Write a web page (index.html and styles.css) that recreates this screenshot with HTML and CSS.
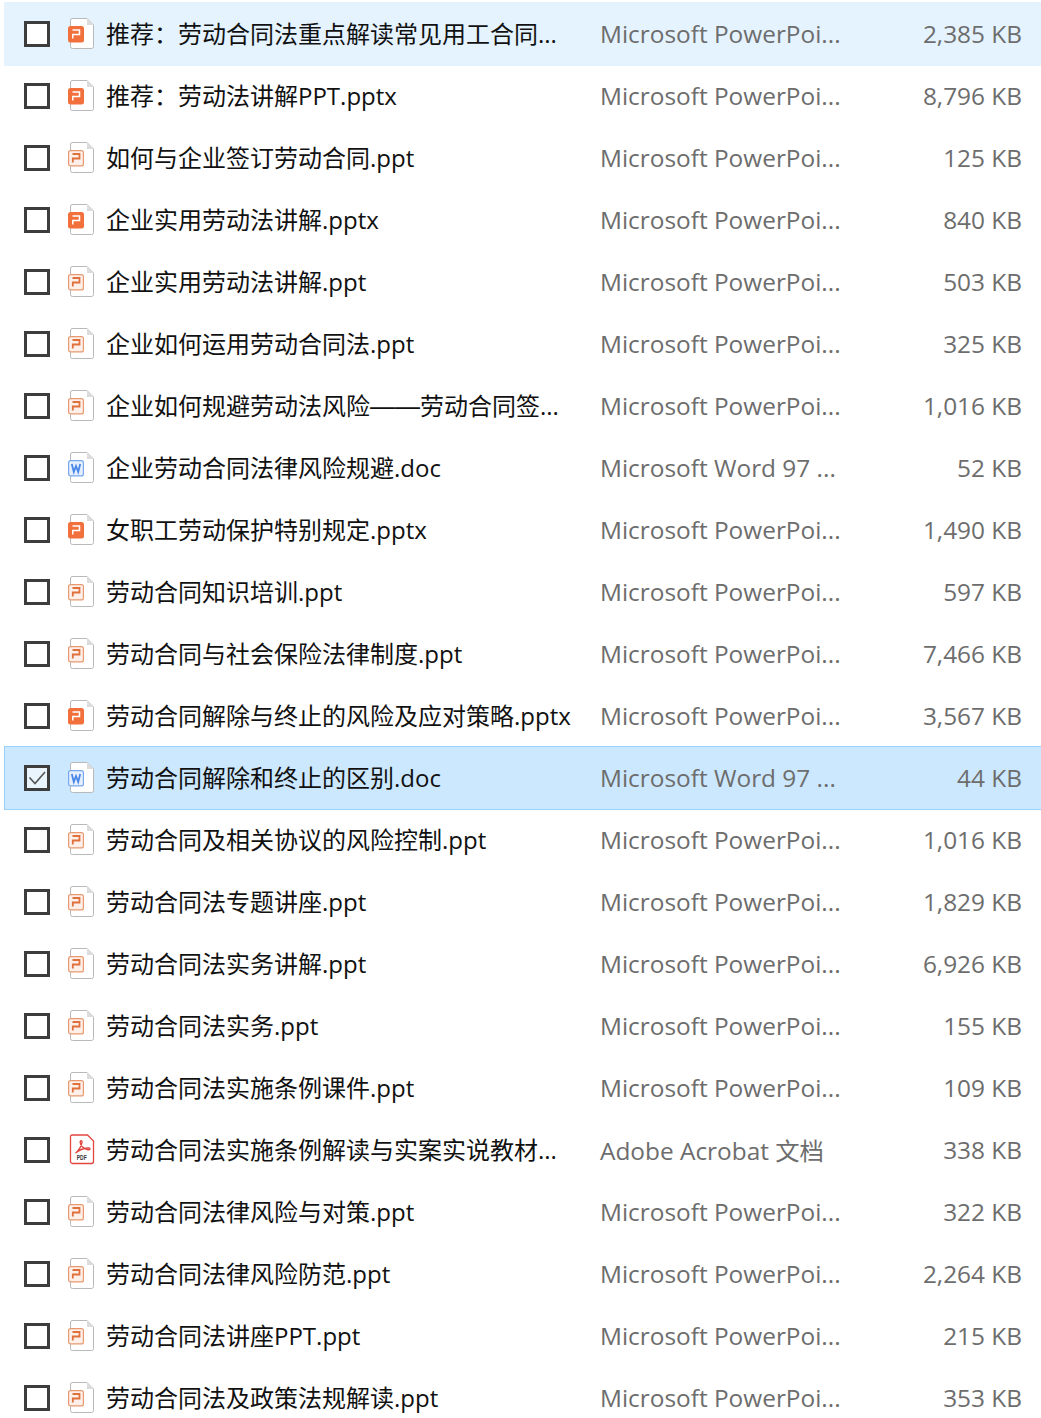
FILE: index.html
```html
<!DOCTYPE html>
<html>
<head>
  <meta charset="utf-8">
  <title>劳动合同法</title>
  <link rel="stylesheet" href="styles.css">
</head>
<body>
<svg class="icon-defs" width="0" height="0">
  <defs>
    <symbol id="page" viewBox="0 0 28 32">
      <path d="M4 .5H19L25.5 7V28.5a2 2 0 0 1-2 2H4.500a2 2 0 0 1-2-2V2a2 2 0 0 1 1.500-1.500Z" fill="#fff" stroke="#b9b9b9"/>
      <path d="M19 .5V7H25.500Z" fill="#dcdcdc"/>
    </symbol>
    <symbol id="icon-pptx" viewBox="0 0 28 32">
      <use href="#page"/>
      <rect x="0" y="8" width="16" height="16.500" rx="2.500" fill="#f2703c"/>
      <path d="M4.500 12H11.500V16.500H4.800V20.500" fill="none" stroke="#fff" stroke-width="1.500"/>
    </symbol>
    <symbol id="icon-ppt" viewBox="0 0 28 32">
      <use href="#page"/>
      <rect x=".6" y="8.600" width="14.800" height="15.300" rx="2" fill="#fdf0ea" stroke="#e9996f" stroke-width="1.200"/>
      <path d="M4.500 12H11.500V16.500H4.800V20.500" fill="none" stroke="#e0703c" stroke-width="1.800"/>
    </symbol>
    <symbol id="icon-doc" viewBox="0 0 28 32">
      <use href="#page"/>
      <rect x=".6" y="8.600" width="14.800" height="15.300" rx="2" fill="#e6f0fd" stroke="#79a8ee" stroke-width="1.200"/>
      <path d="M3.800 12L5.800 20L8 14L10.200 20L12.200 12" fill="none" stroke="#4a86e8" stroke-width="1.800"/>
    </symbol>
    <symbol id="icon-pdf" viewBox="0 0 28 32">
      <path d="M4 1H19.500L25.500 7V27.500a2 2 0 0 1-2 2H4.500a2 2 0 0 1-2-2V2.500A1.500 1.500 0 0 1 4 1Z" fill="#fff" stroke="#e2463f" stroke-width="1.300"/>
      <path d="M7.500 19C10.500 17 13.500 12 14 8.500C14.300 6 12 6 12.200 8.500C12.500 12 16.500 15.500 20 15.800C22.500 16 22.500 13.800 20 14C16 14.300 10.500 16.500 7.500 19Z" fill="none" stroke="#e2463f" stroke-width="1.400"/>
      <text class="pdf-label" x="13.700" y="26" textLength="10" lengthAdjust="spacingAndGlyphs">PDF</text>
    </symbol>
  </defs>
</svg>

<div class="file-list">
  <div class="file-row hover">
    <span class="check"></span>
    <svg class="file-icon"><use href="#icon-pptx"/></svg>
    <span class="file-name">推荐&#xFF1A;劳动合同法重点解读常见用工合同...</span>
    <span class="file-type">Microsoft PowerPoi...</span>
    <span class="file-size">2,385 KB</span>
  </div>
  <div class="file-row">
    <span class="check"></span>
    <svg class="file-icon"><use href="#icon-pptx"/></svg>
    <span class="file-name">推荐&#xFF1A;劳动法讲解PPT.pptx</span>
    <span class="file-type">Microsoft PowerPoi...</span>
    <span class="file-size">8,796 KB</span>
  </div>
  <div class="file-row">
    <span class="check"></span>
    <svg class="file-icon"><use href="#icon-ppt"/></svg>
    <span class="file-name">如何与企业签订劳动合同.ppt</span>
    <span class="file-type">Microsoft PowerPoi...</span>
    <span class="file-size">125 KB</span>
  </div>
  <div class="file-row">
    <span class="check"></span>
    <svg class="file-icon"><use href="#icon-pptx"/></svg>
    <span class="file-name">企业实用劳动法讲解.pptx</span>
    <span class="file-type">Microsoft PowerPoi...</span>
    <span class="file-size">840 KB</span>
  </div>
  <div class="file-row">
    <span class="check"></span>
    <svg class="file-icon"><use href="#icon-ppt"/></svg>
    <span class="file-name">企业实用劳动法讲解.ppt</span>
    <span class="file-type">Microsoft PowerPoi...</span>
    <span class="file-size">503 KB</span>
  </div>
  <div class="file-row">
    <span class="check"></span>
    <svg class="file-icon"><use href="#icon-ppt"/></svg>
    <span class="file-name">企业如何运用劳动合同法.ppt</span>
    <span class="file-type">Microsoft PowerPoi...</span>
    <span class="file-size">325 KB</span>
  </div>
  <div class="file-row">
    <span class="check"></span>
    <svg class="file-icon"><use href="#icon-ppt"/></svg>
    <span class="file-name">企业如何规避劳动法风险<span class="dash">——</span>劳动合同签...</span>
    <span class="file-type">Microsoft PowerPoi...</span>
    <span class="file-size">1,016 KB</span>
  </div>
  <div class="file-row">
    <span class="check"></span>
    <svg class="file-icon"><use href="#icon-doc"/></svg>
    <span class="file-name">企业劳动合同法律风险规避.doc</span>
    <span class="file-type">Microsoft Word 97 ...</span>
    <span class="file-size">52 KB</span>
  </div>
  <div class="file-row">
    <span class="check"></span>
    <svg class="file-icon"><use href="#icon-pptx"/></svg>
    <span class="file-name">女职工劳动保护特别规定.pptx</span>
    <span class="file-type">Microsoft PowerPoi...</span>
    <span class="file-size">1,490 KB</span>
  </div>
  <div class="file-row">
    <span class="check"></span>
    <svg class="file-icon"><use href="#icon-ppt"/></svg>
    <span class="file-name">劳动合同知识培训.ppt</span>
    <span class="file-type">Microsoft PowerPoi...</span>
    <span class="file-size">597 KB</span>
  </div>
  <div class="file-row">
    <span class="check"></span>
    <svg class="file-icon"><use href="#icon-ppt"/></svg>
    <span class="file-name">劳动合同与社会保险法律制度.ppt</span>
    <span class="file-type">Microsoft PowerPoi...</span>
    <span class="file-size">7,466 KB</span>
  </div>
  <div class="file-row">
    <span class="check"></span>
    <svg class="file-icon"><use href="#icon-pptx"/></svg>
    <span class="file-name">劳动合同解除与终止的风险及应对策略.pptx</span>
    <span class="file-type">Microsoft PowerPoi...</span>
    <span class="file-size">3,567 KB</span>
  </div>
  <div class="file-row selected">
    <span class="check">
      <svg class="check-mark" viewBox="0 0 20 20"><path d="M2.500 9.500L8 15.500L18 4"/></svg>
    </span>
    <svg class="file-icon"><use href="#icon-doc"/></svg>
    <span class="file-name">劳动合同解除和终止的区别.doc</span>
    <span class="file-type">Microsoft Word 97 ...</span>
    <span class="file-size">44 KB</span>
  </div>
  <div class="file-row">
    <span class="check"></span>
    <svg class="file-icon"><use href="#icon-ppt"/></svg>
    <span class="file-name">劳动合同及相关协议的风险控制.ppt</span>
    <span class="file-type">Microsoft PowerPoi...</span>
    <span class="file-size">1,016 KB</span>
  </div>
  <div class="file-row">
    <span class="check"></span>
    <svg class="file-icon"><use href="#icon-ppt"/></svg>
    <span class="file-name">劳动合同法专题讲座.ppt</span>
    <span class="file-type">Microsoft PowerPoi...</span>
    <span class="file-size">1,829 KB</span>
  </div>
  <div class="file-row">
    <span class="check"></span>
    <svg class="file-icon"><use href="#icon-ppt"/></svg>
    <span class="file-name">劳动合同法实务讲解.ppt</span>
    <span class="file-type">Microsoft PowerPoi...</span>
    <span class="file-size">6,926 KB</span>
  </div>
  <div class="file-row">
    <span class="check"></span>
    <svg class="file-icon"><use href="#icon-ppt"/></svg>
    <span class="file-name">劳动合同法实务.ppt</span>
    <span class="file-type">Microsoft PowerPoi...</span>
    <span class="file-size">155 KB</span>
  </div>
  <div class="file-row">
    <span class="check"></span>
    <svg class="file-icon"><use href="#icon-ppt"/></svg>
    <span class="file-name">劳动合同法实施条例课件.ppt</span>
    <span class="file-type">Microsoft PowerPoi...</span>
    <span class="file-size">109 KB</span>
  </div>
  <div class="file-row">
    <span class="check"></span>
    <svg class="file-icon"><use href="#icon-pdf"/></svg>
    <span class="file-name">劳动合同法实施条例解读与实案实说教材...</span>
    <span class="file-type">Adobe Acrobat 文档</span>
    <span class="file-size">338 KB</span>
  </div>
  <div class="file-row">
    <span class="check"></span>
    <svg class="file-icon"><use href="#icon-ppt"/></svg>
    <span class="file-name">劳动合同法律风险与对策.ppt</span>
    <span class="file-type">Microsoft PowerPoi...</span>
    <span class="file-size">322 KB</span>
  </div>
  <div class="file-row">
    <span class="check"></span>
    <svg class="file-icon"><use href="#icon-ppt"/></svg>
    <span class="file-name">劳动合同法律风险防范.ppt</span>
    <span class="file-type">Microsoft PowerPoi...</span>
    <span class="file-size">2,264 KB</span>
  </div>
  <div class="file-row">
    <span class="check"></span>
    <svg class="file-icon"><use href="#icon-ppt"/></svg>
    <span class="file-name">劳动合同法讲座PPT.ppt</span>
    <span class="file-type">Microsoft PowerPoi...</span>
    <span class="file-size">215 KB</span>
  </div>
  <div class="file-row">
    <span class="check"></span>
    <svg class="file-icon"><use href="#icon-ppt"/></svg>
    <span class="file-name">劳动合同法及政策法规解读.ppt</span>
    <span class="file-type">Microsoft PowerPoi...</span>
    <span class="file-size">353 KB</span>
  </div>
</div>
</body>
</html>
```

FILE: styles.css
```css
html, body {
  margin: 0;
  padding: 0;
  background: #fff;
}

body {
  height: 1418px;
  overflow: hidden;
  font-family: "Open Sans", "Noto Sans CJK SC", sans-serif;
  font-size: 24px;
}

.icon-defs {
  position: absolute;
}

.file-list {
  padding: 2px 0 0 4px;
}

.file-row {
  display: flex;
  align-items: center;
  box-sizing: border-box;
  height: 64px;
  margin-bottom: -2px;
  padding-left: 20px;
  border: 1px solid transparent;
  border-width: 1px 0 1px 1px;
}

.file-row.hover {
  background-color: #e5f3ff;
}

.file-row.selected {
  background-color: #cce8ff;
  border-color: #99d1ff;
}

.check {
  display: flex;
  align-items: center;
  justify-content: center;
  box-sizing: border-box;
  width: 26px;
  height: 26px;
  margin-left: -1px;
  border: 3px solid #3d3d3d;
  background-color: #fff;
  flex: none;
}

.file-row.selected .check {
  background-color: #e9f4fd;
}

.check-mark {
  width: 20px;
  height: 20px;
  fill: none;
  stroke: #555;
  stroke-width: 1.6;
}

.file-icon {
  width: 28px;
  height: 32px;
  margin-left: 18px;
  flex: none;
}

.pdf-label {
  font-family: "Liberation Sans", sans-serif;
  font-size: 8px;
  font-weight: bold;
  fill: #333;
  text-anchor: middle;
}

.file-name {
  width: 494px;
  margin-left: 10px;
  margin-bottom: 4px;
  color: #111;
  white-space: nowrap;
  flex: none;
}

.dash {
  font-family: "Liberation Sans", sans-serif;
  font-size: 25px;
}

.file-type {
  flex: 1;
  margin-bottom: 2px;
  color: #6d6d6d;
  font-size: 24.4px;
  white-space: nowrap;
}

.file-size {
  margin-bottom: 2px;
  padding-right: 19px;
  color: #6d6d6d;
  font-size: 24.4px;
  white-space: nowrap;
}
```
